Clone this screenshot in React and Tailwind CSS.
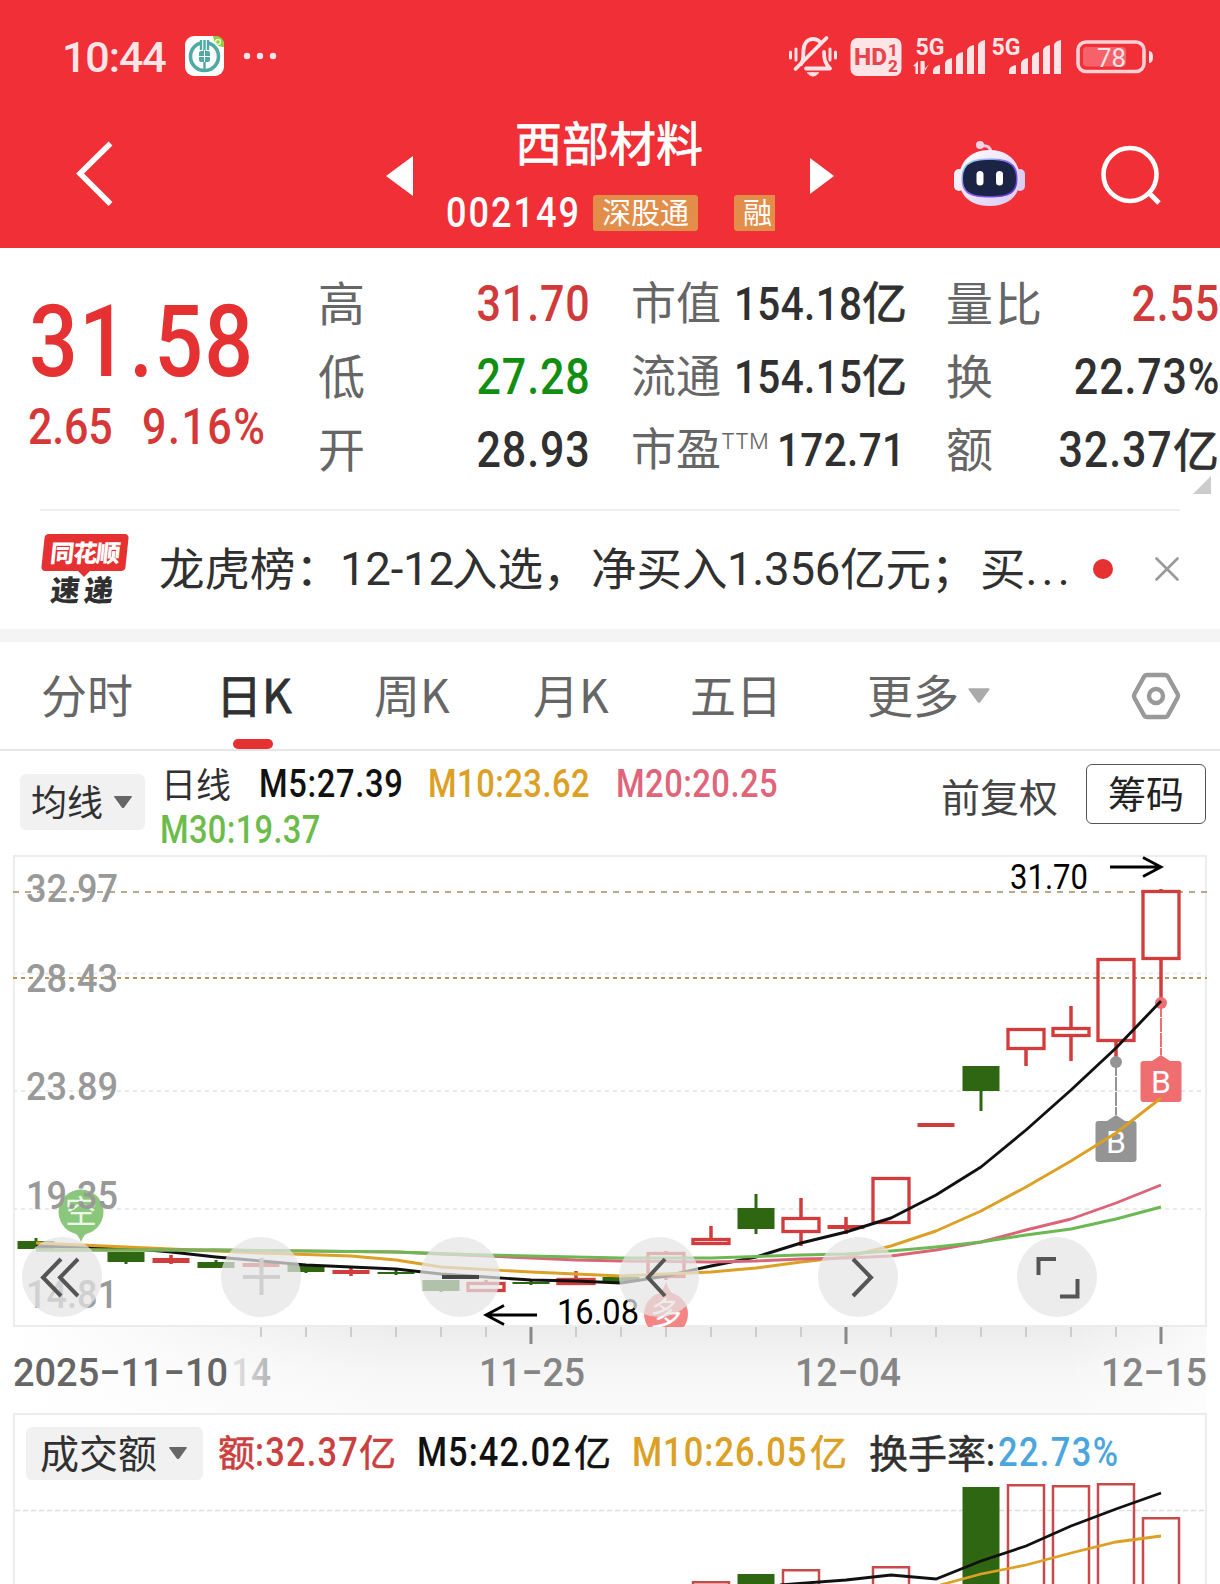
// pages/StockDetail.jsx
import clsx from "clsx";

const CJK = "font-['Noto_Sans_CJK_SC',sans-serif]";

const QUOTE_MAIN = [
  { label: "高", value: "31.70", color: "text-[#d03a3a]" },
  { label: "低", value: "27.28", color: "text-[#128f12]" },
  { label: "开", value: "28.93", color: "text-[#303030]" },
];

const QUOTE_CAP = [
  { label: "市值", value: "154.18", unit: "亿" },
  { label: "流通", value: "154.15", unit: "亿" },
  { label: "市盈", sup: "TTM", value: "172.71" },
];

const QUOTE_RATIO = [
  { label: "量比", value: "2.55", color: "text-[#d03a3a]" },
  { label: "换", value: "22.73%", color: "text-[#303030]" },
  { label: "额", value: "32.37", unit: "亿", color: "text-[#303030]" },
];

// pixel data: x centre, body top/bottom, wick top/bottom
const CANDLES = [
  { x: 36, t: 1241, b: 1249, h: 1238, l: 1249, type: "down" },
  { x: 126, t: 1252, b: 1262, h: 1252, l: 1264, type: "down" },
  { x: 171, t: 1258, b: 1263, h: 1255, l: 1264, type: "up" },
  { x: 216, t: 1262, b: 1268, h: 1260, l: 1268, type: "down" },
  { x: 261, t: 1263, b: 1267, h: 1261, l: 1268, type: "up" },
  { x: 306, t: 1265, b: 1272, h: 1265, l: 1273, type: "down" },
  { x: 351, t: 1270, b: 1274, h: 1268, l: 1276, type: "up" },
  { x: 396, t: 1272, b: 1274, h: 1270, l: 1275, type: "down" },
  { x: 441, t: 1280, b: 1291, h: 1280, l: 1292, type: "down" },
  { x: 486, t: 1282, b: 1292, h: 1280, l: 1292, type: "up" },
  { x: 531, t: 1282, b: 1284, h: 1281, l: 1285, type: "down" },
  { x: 576, t: 1278, b: 1285, h: 1271, l: 1285, type: "up" },
  { x: 621, t: 1277, b: 1282, h: 1277, l: 1283, type: "down" },
  { x: 666, t: 1252, b: 1278, h: 1251, l: 1280, type: "up" },
  { x: 711, t: 1238, b: 1245, h: 1226, l: 1245, type: "up" },
  { x: 756, t: 1208, b: 1229, h: 1194, l: 1234, type: "down" },
  { x: 801, t: 1217, b: 1233, h: 1198, l: 1246, type: "up" },
  { x: 846, t: 1225, b: 1229, h: 1217, l: 1234, type: "up" },
  { x: 891, t: 1177, b: 1224, h: 1177, l: 1224, type: "up" },
  { x: 936, t: 1123, b: 1127, h: 1123, l: 1127, type: "up" },
  { x: 981, t: 1066, b: 1091, h: 1066, l: 1111, type: "down" },
  { x: 1026, t: 1028, b: 1050, h: 1028, l: 1066, type: "up" },
  { x: 1071, t: 1027, b: 1037, h: 1006, l: 1061, type: "up" },
  { x: 1116, t: 958, b: 1042, h: 958, l: 1062, type: "up" },
  { x: 1161, t: 890, b: 960, h: 889, l: 1003, type: "up" },
];

const MA5 = "36,1246 126,1248 171,1252 216,1257 261,1261 306,1265 351,1267 396,1269 441,1274 486,1277 531,1280 576,1281 621,1283 666,1276 711,1266 756,1257 801,1243 846,1232 891,1218 936,1195 981,1167 1026,1130 1071,1090 1116,1048 1161,1001";
const MA10 = "36,1243 126,1247 216,1251 261,1253 351,1256 396,1260 441,1267 531,1272 621,1276 666,1274 711,1272 756,1268 801,1262 846,1257 891,1246 936,1231 981,1211 1026,1187 1071,1161 1116,1133 1161,1098";
const MA20 = "36,1250 216,1250 396,1252 486,1256 576,1260 621,1261 711,1262 756,1261 801,1259 846,1258 891,1256 936,1250 981,1242 1026,1230 1071,1219 1116,1203 1161,1185";
const MA30 = "36,1250 216,1250 396,1252 486,1255 621,1258 711,1258 801,1255 846,1254 891,1251 936,1247 981,1242 1026,1235 1071,1229 1116,1219 1161,1207";

const PRICE_LABELS = [
  { text: "32.97", y: 902 },
  { text: "28.43", y: 992 },
  { text: "23.89", y: 1100 },
  { text: "19.35", y: 1209 },
  { text: "14.81", y: 1308 },
];

const VOLUMES = [
  { x: 711, t: 1581, type: "up" },
  { x: 756, t: 1574, type: "down" },
  { x: 801, t: 1569, type: "up" },
  { x: 891, t: 1566, type: "up" },
  { x: 981, t: 1487, type: "down" },
  { x: 1026, t: 1484, type: "up" },
  { x: 1071, t: 1485, type: "up" },
  { x: 1116, t: 1483, type: "up" },
  { x: 1161, t: 1517, type: "up" },
];

const TICKS = Array.from({ length: 21 }, (_, i) => 261 + i * 45);
const MAJOR_TICKS = [531, 846, 1161];

// Narrow digits, the box keeps the width given by the caller
function Num({ children, className, right, tracking = "tracking-[.02em]" }) {
  return (
    <span className={clsx("flex shrink-0 whitespace-nowrap font-['Roboto',sans-serif] font-medium leading-none", right && "justify-end", className)}>
      <span className={clsx("inline-block scale-x-[.86]", tracking, right ? "origin-right" : "origin-left")}>
        {children}
      </span>
    </span>
  );
}

function Han({ children, className }) {
  return <span className={clsx("shrink-0 -translate-y-[.06em] whitespace-nowrap leading-none", CJK, className)}>{children}</span>;
}

function Caret({ className }) {
  return (
    <svg viewBox="0 0 20 14" className={className}>
      <path d="M2 1h16q1.500 0 .6 1.300L11.200 12.400q-1.200 1.400-2.400 0L1.400 2.300Q.5 1 2 1z" fill="currentColor" />
    </svg>
  );
}

function Signal({ data }) {
  return (
    <svg width="74" height="44" viewBox="0 0 74 44" className="shrink-0 text-[#fde4e6]" fill="currentColor">
      <text x="2.500" y="21" fontFamily="Roboto" fontWeight="700" fontSize="23" textLength="29" lengthAdjust="spacingAndGlyphs">5G</text>
      {data && <path d="M0 32l5-5v13H2.500v-7.500zM7.500 27H10v13H7.500zM11.500 27v13h-2V27zM11.500 27v8l4.500-5-4 7z" />}
      <path d="M20 40v-4q1-4 7-5v9zM32 40V29q1-4 7-5v16zM43 40V23q1-4 7-5v22zM54 40V16q1-4 7-5v29zM65 40V11q1-4 7-5v34z" />
    </svg>
  );
}

function StatusBar() {
  return (
    <div className="flex h-[112px] items-center pl-[62px] pr-[66px] text-[#fde4e6]">
      <span className="w-[123px] pt-[2px] font-['Roboto',sans-serif] text-[43px] font-medium leading-none tracking-[-.025em]">10:44</span>
      <svg width="39" height="40" viewBox="0 0 39 40">
        <rect width="39" height="40" rx="9" fill="#fff" />
        <path d="M28 0h2q9 0 9 9v2q-9 1-11-11z" fill="#8ccf3c" />
        <circle cx="33" cy="6" r="2.500" fill="none" stroke="#e4f6cc" strokeWidth="1.500" />
        <circle cx="19.500" cy="20.500" r="14" fill="none" stroke="#4fa9a5" strokeWidth="3.600" />
        <path d="M15 4h9v8h-9z" fill="#fff" />
        <path d="M16 4v10M19.500 4v31M23 4v10" stroke="#4fa9a5" strokeWidth="2.400" />
        <rect x="14" y="15" width="11" height="11" rx="2" fill="#4fa9a5" />
        <path d="M19.500 14v12M14 20.500h11" stroke="#fff" strokeWidth="1" />
      </svg>
      <svg width="34" height="8" viewBox="0 0 34 8" className="ml-[19px]" fill="currentColor">
        <circle cx="4" cy="4" r="3.200" />
        <circle cx="17" cy="4" r="3.200" />
        <circle cx="30" cy="4" r="3.200" />
      </svg>
      <div className="flex-1" />
      <svg width="48" height="44" viewBox="0 0 48 44" className="mr-[13px] mt-[1px]" fill="none" stroke="currentColor" strokeLinecap="round">
        <path d="M12 29c3-4 2-8 2.500-14C15 8 19 4 24 4c3 0 6 1.500 8 4" strokeWidth="3.800" />
        <path d="M35 17c0 7 1 11 6 16.500H17" strokeWidth="3.800" strokeLinejoin="round" />
        <path d="M6.500 34 37.500 3" strokeWidth="3.800" />
        <path d="M18.500 38q5.500 6.500 11 0z" fill="currentColor" strokeWidth="1" />
        <path d="M1.500 17v6M7 14v11M41 14v11M46.500 17v6" strokeWidth="3" />
      </svg>
      <svg width="52" height="38" viewBox="0 0 52 38" className="mr-[11px] mt-[1px]">
        <rect x=".5" width="51" height="38" rx="7" fill="#fde4e6" />
        <text x="4" y="27" fontFamily="Roboto" fontWeight="800" fontSize="23" fill="#e8454d" textLength="33" lengthAdjust="spacingAndGlyphs">HD</text>
        <text x="38" y="17.500" fontFamily="Roboto" fontWeight="800" fontSize="17" fill="#e8454d">1</text>
        <text x="38" y="34" fontFamily="Roboto" fontWeight="800" fontSize="17" fill="#e8454d">2</text>
      </svg>
      <Signal data />
      <div className="w-[2px]" />
      <Signal />
      <svg width="78" height="34" viewBox="0 0 78 34" className="ml-[13px] mt-[1px]">
        <rect x="2" y="2" width="66" height="29.500" rx="8" fill="none" stroke="#fcd0d4" strokeWidth="3.600" />
        <rect x="7" y="7" width="43" height="19.500" rx="4" fill="#f5626a" />
        <path d="M73 11q4 0 4 6t-4 6z" fill="#fde4e6" />
        <text x="21" y="26.500" fontFamily="Roboto" fontSize="26" fill="#fde4e6" textLength="29" lengthAdjust="spacingAndGlyphs">78</text>
      </svg>
    </div>
  );
}

function Robot() {
  return (
    <svg width="74" height="70" viewBox="0 0 74 70">
      <defs>
        <linearGradient id="shell" x1="0" y1="0" x2="1" y2="1">
          <stop offset="0" stopColor="#fff" />
          <stop offset="1" stopColor="#d9c8f2" />
        </linearGradient>
        <linearGradient id="rim" x1="0" y1="0" x2="1" y2="1">
          <stop offset="0" stopColor="#a4f0f4" />
          <stop offset=".5" stopColor="#8a5cf0" />
          <stop offset="1" stopColor="#5a34d6" />
        </linearGradient>
      </defs>
      <path d="M28 6q10-2 10 8" fill="none" stroke="#f3c9e0" strokeWidth="3" />
      <circle cx="27" cy="5" r="4" fill="#f6d3e6" />
      <rect x="1" y="29" width="10" height="22" rx="5" fill="#f3edfc" />
      <rect x="62" y="29" width="10" height="22" rx="5" fill="#dccdf3" />
      <path d="M36.500 10c20 0 30.500 13 30.500 29S56 66 36.500 66 6 55 6 39s10.500-29 30.500-29z" fill="url(#shell)" />
      <path d="M36.500 18.500c20 0 28 5 28 20s-8 19-28 19-28-4-28-19 8-20 28-20z" fill="url(#rim)" />
      <path d="M36.500 20c19 0 26.500 5 26.500 18.500S55.500 56 36.500 56 10 52 10 38.500 17.500 20 36.500 20z" fill="#1b2444" />
      <rect x="23.500" y="31" width="7" height="14.500" rx="3.500" fill="#fff" />
      <rect x="43" y="31" width="7" height="14.500" rx="3.500" fill="#fff" />
    </svg>
  );
}

function Header() {
  return (
    <header className="h-[248px] bg-[#f12f37]">
      <StatusBar />
      <div className="flex h-[136px] items-start">
        <svg width="40" height="68" viewBox="0 0 40 68" className="ml-[74px] mt-[28px]">
          <path d="M36.500 3.500 6 33.500 36.500 64" fill="none" stroke="#fff" strokeWidth="5.500" />
        </svg>
        <svg width="27" height="40" viewBox="0 0 27 40" className="ml-[272px] mt-[44px]">
          <path d="M27 0v40L0 20z" fill="#fff" />
        </svg>
        <div className="ml-[33px] flex w-[329px] flex-col">
          <Han className="mt-[8px] pl-[69px] text-[47px] text-white [-webkit-text-stroke:.8px]">西部材料</Han>
          <div className="mt-[28px] flex h-[36px] items-center">
            <Num className="w-[147px] text-[42px] text-white" tracking="tracking-[.055em]">002149</Num>
            <span className="flex h-[36px] w-[105px] items-center justify-center rounded-[3px] bg-[#e28d49]">
              <Han className="text-[29px] text-white">深股通</Han>
            </span>
            <span className="ml-[36px] flex h-[36px] w-[41px] items-center overflow-hidden rounded-l-[3px] bg-[#e28d49] pl-[9px]">
              <Han className="text-[29px] text-white">融</Han>
            </span>
          </div>
        </div>
        <svg width="24" height="36" viewBox="0 0 24 36" className="ml-[35px] mt-[46px]">
          <path d="M0 0v36l24-18z" fill="#fff" />
        </svg>
        <div className="ml-[119px] mt-[28px]"><Robot /></div>
        <svg width="62" height="62" viewBox="0 0 62 62" className="ml-[73px] mt-[33px]">
          <circle cx="30" cy="29.500" r="26.500" fill="none" stroke="#fff" strokeWidth="4.600" />
          <path d="m49 48 10 10" stroke="#fff" strokeWidth="5" />
        </svg>
      </div>
    </header>
  );
}

function Quote() {
  return (
    <section className="relative flex h-[261px] pt-[19px]">
      <div className="w-[318px] pl-[29px] text-[#e53131]">
        <div className="flex h-[150px] items-center">
          <Num className="w-[220px] text-[100px]" tracking="tracking-[.014em]">31.58</Num>
        </div>
        <div className="flex h-[20px] items-center text-[50px] text-[#d63838]">
          <Num className="-ml-[1px] w-[114px]" tracking="tracking-[-.005em]">2.65</Num>
          <Num className="w-[130px]" tracking="tracking-[.035em]">9.16%</Num>
        </div>
      </div>
      <div className="w-[273px]">
        {QUOTE_MAIN.map((r) => (
          <div key={r.label} className="flex h-[73px] items-center justify-between">
            <Han className="text-[47px] text-[#666]">{r.label}</Han>
            <Num right className={clsx("w-[120px] text-[50px]", r.color)}>{r.value}</Num>
          </div>
        ))}
      </div>
      <div className="ml-[40px] w-[276px]">
        {QUOTE_CAP.map((r) => (
          <div key={r.label} className="flex h-[73px] items-center text-[#303030]">
            <Han className="text-[45px] text-[#666]">{r.label}</Han>
            {r.sup && <span className="w-[46px] pb-[18px] font-['Inter',sans-serif] text-[22px] font-light leading-none text-[#666]">{r.sup}</span>}
            <span className="flex-1" />
            <Num right className="w-[128px] text-[47px]" tracking="tracking-[.01em]">{r.value}</Num>
            {r.unit ? (
              <Han className="mr-[1px] w-[44px] text-[45px] [-webkit-text-stroke:.8px]">{r.unit}</Han>
            ) : (
              <span className="w-[2px]" />
            )}
          </div>
        ))}
      </div>
      <div className="ml-[38px] flex-1">
        {QUOTE_RATIO.map((r) => (
          <div key={r.label} className="flex h-[73px] items-center justify-between">
            <Han className="ml-[1px] text-[47px] tracking-[.04em] text-[#666]">{r.label}</Han>
            <span className={clsx("flex items-center", r.color)}>
              <Num right className="w-[110px] text-[50px]">{r.value}</Num>
              {r.unit && <Han className="mr-[1px] text-[46px] [-webkit-text-stroke:.8px]">{r.unit}</Han>}
            </span>
          </div>
        ))}
      </div>
      <svg width="18" height="18" viewBox="0 0 18 18" className="absolute bottom-[15px] right-[9px]">
        <path d="M18 0v18H0z" fill="#ccc" />
      </svg>
    </section>
  );
}

function News() {
  return (
    <section className="mx-[40px] flex h-[120px] items-center border-t-2 border-[#eee]">
      <div className="flex w-[119px] flex-col pb-[2px]">
        <div className="flex h-[37px] w-[90px] items-center justify-center">
          <span className="flex h-[37px] w-[84px] -skew-x-6 items-center justify-center rounded-[4px] bg-[#e53131]">
            <Han className="text-[24px] font-black tracking-[-.04em] text-white">同花顺</Han>
          </span>
        </div>
        <svg width="12" height="6" viewBox="0 0 12 6" className="ml-[38px]">
          <path d="M0 0h12L6 6z" fill="#e53131" />
        </svg>
        <Han className="ml-[11px] mt-[-1px] -skew-x-6 text-[29px] font-black tracking-[.16em] text-[#303030]">速递</Han>
      </div>
      <p className="flex w-[920px] items-center whitespace-nowrap text-[45.5px] text-[#303030]">
        <Han className="w-[181px]">龙虎榜：</Han>
        <span className="w-[112px] font-['Roboto',sans-serif] leading-none tracking-[-.005em]">12-12</span>
        <Han className="w-[139px]">入选，</Han>
        <Han className="w-[136px]">净买入</Han>
        <span className="w-[113px] font-['Roboto',sans-serif] leading-none tracking-[-.005em]">1.356</span>
        <Han className="w-[140px]">亿元；</Han>
        <Han>买</Han>
        <span className="font-['Roboto',sans-serif] leading-none tracking-[.09em]">...</span>
      </p>
      <span className="mb-[2px] ml-[14px] size-[20px] shrink-0 rounded-full bg-[#e53131]" />
      <svg width="24" height="24" viewBox="0 0 24 24" className="mb-[2px] ml-[42px] shrink-0" stroke="#999" strokeWidth="2.600" strokeLinecap="round">
        <path d="m1.500 1.500 21 21m0-21-21 21" />
      </svg>
    </section>
  );
}

function Tabs() {
  return (
    <nav className="flex h-[109px] items-center border-b-2 border-[#e6e6e6] pl-[41px] text-[46px] text-[#666]">
      <Han className="w-[175px]">分时</Han>
      <div className="relative flex h-full w-[158px] items-center text-[#303030]">
        <Han className="[-webkit-text-stroke:.8px]">日K</Han>
        <span className="absolute bottom-0 left-[17px] h-[10px] w-[40px] rounded-full bg-[#e53131]" />
      </div>
      <Han className="w-[159px]">周K</Han>
      <Han className="w-[157px]">月K</Han>
      <Han className="w-[177px]">五日</Han>
      <Han>更多</Han>
      <Caret className="ml-[8px] h-[19px] w-[24px] text-[#aaa]" />
      <svg width="50" height="48" viewBox="0 0 50 48" className="ml-[140px]" fill="none" stroke="#999" strokeWidth="4.400" strokeLinejoin="round">
        <path d="M16 3h18q2 0 3 1.800l9.500 17q1 2 0 4l-9.500 17.400q-1 1.800-3 1.800H16q-2 0-3-1.800L3.500 26q-1-2 0-4L13 4.800Q14 3 16 3z" />
        <circle cx="25" cy="24" r="7" />
      </svg>
    </nav>
  );
}

function ChartHeader() {
  return (
    <div className="flex h-[103px] items-start">
      <button className="ml-[20px] mt-[23px] flex h-[56px] w-[125px] items-center rounded-[6px] bg-[#f1f1f1] pl-[11px]">
        <Han className="text-[36px] text-[#303030]">均线</Han>
        <Caret className="ml-[10px] h-[14px] w-[20px] text-[#666]" />
      </button>
      <div className="ml-[16px] mt-[10px] w-[640px] text-[38px]">
        <div className="flex h-[46px] items-center">
          <Han className="w-[98px] text-[35px] text-[#303030]">日线</Han>
          <Num className="w-[169px] text-[#111]">M5:27.39</Num>
          <Num className="w-[188px] text-[#dca024]" tracking="tracking-[.015em]">M10:23.62</Num>
          <Num className="text-[#e0647a]" tracking="tracking-[.015em]">M20:20.25</Num>
        </div>
        <div className="flex h-[46px] items-center">
          <Num className="-ml-[1px] text-[#6cbc4c]" tracking="tracking-[.01em]">M30:19.37</Num>
        </div>
      </div>
      <Han className="ml-[140px] mt-[27px] text-[39px] text-[#444]">前复权</Han>
      <button className="ml-[28px] mt-[13px] flex h-[60px] w-[120px] items-center justify-center rounded-[6px] border-[1.500px] border-[#555]">
        <Han className="text-[38px] text-[#222]">筹码</Han>
      </button>
    </div>
  );
}

function Candle({ x, t, b, h, l, type }) {
  if (type === "down") {
    return (
      <g fill="#2f6612">
        <rect x={x - 1.5} y={h} width="3" height={l - h} />
        <rect x={x - 18.5} y={t} width="37" height={b - t} />
      </g>
    );
  }
  const hollow = b - t > 6;
  return (
    <g fill="#d23c3c">
      {h < t && <rect x={x - 1.75} y={h} width="3.5" height={t - h + 1} />}
      {l > b && <rect x={x - 1.75} y={b - 1} width="3.5" height={l - b + 1} />}
      {hollow ? (
        <rect x={x - 18} y={t + 1.5} width="36" height={b - t - 3} fill="none" stroke="#d23c3c" strokeWidth="3.300" />
      ) : (
        <rect x={x - 18.5} y={t} width="37" height={b - t} />
      )}
    </g>
  );
}

function BuyMark({ x, from, top, color }) {
  return (
    <g>
      <circle cx={x} cy={from} r="6" fill={color} />
      <path d={`M${x} ${from}V${top}`} stroke={color} strokeWidth="2" strokeDasharray="14 1" />
      <path d={`M${x - 9} ${top + 6}l9-6 9 6z`} fill={color} />
      <rect x={x - 20.5} y={top + 6} width="41" height="41" rx="3" fill={color} />
      <text x={x} y={top + 37.5} textAnchor="middle" fontFamily="Roboto" fontSize="32" fill="#fff">B</text>
    </g>
  );
}

const ROUND_BUTTONS = [
  { x: 22, color: "stroke-[#555]", d: "M39 22 21 40.500 39 59M56 22 38 40.500 56 59" },
  { x: 221, color: "stroke-[#cfcfcf]", d: "M22 40h37M40.500 21v37" },
  { x: 420, color: "stroke-[#444]", d: "M22 40h37" },
  { x: 619, color: "stroke-[#555]", d: "M46 22 29 40.500 46 59" },
  { x: 818, color: "stroke-[#555]", d: "M35 22 53 40.500 35 59" },
  { x: 1017, color: "stroke-[#555]", d: "M21.500 38V22H39M43 59.500h17.500V42" },
];

function KChart() {
  return (
    <div className="h-[473px]">
      <svg width="1220" height="473" viewBox="0 854 1220 473">
        <rect x="14" y="856" width="1192" height="470" fill="#fff" stroke="#ececec" strokeWidth="2" />
        <g strokeWidth="2">
          <path d="M13 973.500H1207M13 1091H1207M13 1209H1207" stroke="#eaeaea" strokeDasharray="4 4" />
          <path d="M13 892H1207" stroke="#b8a98a" strokeDasharray="6 6" />
          <path d="M13 978H1207" stroke="#b8955c" strokeDasharray="4 4" />
        </g>
        <circle cx="81" cy="1212" r="22.500" fill="#8bc77b" />
        <path d="M69 1230h24q-9 3-12 12-3-9-12-12z" fill="#8bc77b" />
        <text x="81" y="1223" textAnchor="middle" fontFamily="Noto Sans CJK SC" fontSize="32" fill="#eaf7e6">空</text>
        <g fontFamily="Roboto" fontWeight="500" fontSize="39.500" fill="#999">
          {PRICE_LABELS.map((p) => (
            <text key={p.text} x="26" y={p.y} textLength="92" lengthAdjust="spacingAndGlyphs">{p.text}</text>
          ))}
        </g>
        {CANDLES.map((c) => <Candle key={c.x} {...c} />)}
        <BuyMark x={1116} from={1062} top={1115} color="#949494" />
        <BuyMark x={1161} from={1003} top={1055} color="#ef6e70" />
        <path d="M666 1282q3 11 12 15h-24q9-4 12-15z" fill="#f58584" />
        <circle cx="666" cy="1314" r="22" fill="#f58584" />
        <text x="666" y="1325" textAnchor="middle" fontFamily="Noto Sans CJK SC" fontSize="32" fill="#fff">多</text>
        <g fill="none" strokeWidth="2.900" strokeLinejoin="round">
          <polyline points={MA5} stroke="#111" />
          <polyline points={MA10} stroke="#dca024" />
          <polyline points={MA20} stroke="#dc6478" />
          <polyline points={MA30} stroke="#6cb852" />
        </g>
        <g fill="none" stroke="#000" strokeWidth="2.800">
          <path d="M1110 867h50M1143 857.500l18 9.500-18 9.500" />
          <path d="M537 1315h-50M504 1305.500l-18 9.500 18 9.500" />
        </g>
        <g fontFamily="Roboto" fontSize="35" fill="#000">
          <text x="1010" y="889" textLength="78" lengthAdjust="spacingAndGlyphs">31.70</text>
          <text x="557" y="1324" textLength="82" lengthAdjust="spacingAndGlyphs">16.08</text>
        </g>
        {ROUND_BUTTONS.map((b) => (
          <g key={b.x} transform={`translate(${b.x} 1237)`}>
            <circle cx="40" cy="40" r="40" fill="#e4e4e4" fillOpacity=".72" />
            <path d={b.d} fill="none" strokeWidth="4" className={b.color} />
          </g>
        ))}
      </svg>
    </div>
  );
}

function DateAxis() {
  return (
    <div className="h-[86px]">
      <svg width="1220" height="86" viewBox="0 1327 1220 86">
        <defs>
          <linearGradient id="axisV" x1="0" y1="0" x2="0" y2="1">
            <stop offset="0" stopColor="#ececec" />
            <stop offset=".5" stopColor="#f6f6f6" />
            <stop offset="1" stopColor="#fafafa" />
          </linearGradient>
          <linearGradient id="axisH" x1="0" y1="0" x2="1" y2="0">
            <stop offset="0" stopColor="#fff" />
            <stop offset=".06" stopColor="#fff" stopOpacity=".85" />
            <stop offset=".32" stopColor="#fff" stopOpacity="0" />
            <stop offset=".88" stopColor="#fff" stopOpacity="0" />
            <stop offset="1" stopColor="#fff" stopOpacity=".7" />
          </linearGradient>
          <linearGradient id="fade" x1="0" y1="0" x2="1" y2="0">
            <stop offset="0" stopColor="#e6e6e6" />
            <stop offset="1" stopColor="#b4b4b4" />
          </linearGradient>
        </defs>
        <rect x="13" y="1327" width="1194" height="86" fill="url(#axisV)" />
        <rect x="13" y="1327" width="1194" height="86" fill="url(#axisH)" />
        {TICKS.map((x) =>
          MAJOR_TICKS.includes(x) ? (
            <rect key={x} x={x - 1.5} y="1327" width="3" height="17" fill="#888" />
          ) : (
            <rect key={x} x={x - 1} y="1327" width="2" height="10" fill="#ccc" />
          )
        )}
        <g fontFamily="Roboto" fontWeight="500" fontSize="39.500" fill="#858585">
          <text x="13" y="1386" fill="#666" textLength="215" lengthAdjust="spacingAndGlyphs">2025−11−10</text>
          <text x="231" y="1386" fill="url(#fade)" textLength="40" lengthAdjust="spacingAndGlyphs">14</text>
          <text x="479" y="1386" textLength="106" lengthAdjust="spacingAndGlyphs">11−25</text>
          <text x="795" y="1386" textLength="106" lengthAdjust="spacingAndGlyphs">12−04</text>
          <text x="1101" y="1386" textLength="106" lengthAdjust="spacingAndGlyphs">12−15</text>
        </g>
      </svg>
    </div>
  );
}

function Volume() {
  return (
    <div className="mx-[13px] h-[171px] border-2 border-b-0 border-[#ececec] bg-white">
      <div className="flex h-[68px] items-center pl-[11px] pt-[8px] text-[40px]">
        <button className="mr-[15px] flex h-[53px] w-[177px] shrink-0 items-center rounded-[6px] bg-[#f1f1f1] pl-[14px]">
          <Han className="text-[39px] text-[#303030]">成交额</Han>
          <Caret className="ml-[11px] h-[14px] w-[20px] text-[#666]" />
        </button>
        <div className="flex w-[199px] items-center text-[#cc3f3f]">
          <Han className="w-[37px] text-[37px] [-webkit-text-stroke:.6px]">额</Han>
          <Num className="w-[104px]" tracking="tracking-[.035em]">:32.37</Num>
          <Han className="text-[37px] [-webkit-text-stroke:.6px]">亿</Han>
        </div>
        <div className="flex w-[215px] items-center text-[#111]">
          <Num className="w-[157px]" tracking="tracking-[.03em]">M5:42.02</Num>
          <Han className="text-[37px] [-webkit-text-stroke:.6px]">亿</Han>
        </div>
        <div className="flex w-[237px] items-center text-[#dca024]">
          <Num className="w-[178px]" tracking="tracking-[.03em]">M10:26.05</Num>
          <Han className="text-[37px] [-webkit-text-stroke:.6px]">亿</Han>
        </div>
        <Han className="text-[39px] text-[#303030] [-webkit-text-stroke:.5px]">换手率</Han>
        <Num className="w-[12px] text-[#303030]">:</Num>
        <Num className="text-[#4ba6dd]" tracking="tracking-[.04em]">22.73%</Num>
      </div>
      <svg width="1190" height="101" viewBox="15 1483 1190 101">
        <path d="M15 1510.500H1205" stroke="#ddd" strokeWidth="1.500" strokeDasharray="5 3" />
        {VOLUMES.map((v) =>
          v.type === "down" ? (
            <rect key={v.x} x={v.x - 18.5} y={v.t} width="37" height="120" fill="#2f6612" />
          ) : (
            <rect key={v.x} x={v.x - 18} y={v.t + 1.25} width="36" height="120" fill="none" stroke="#c84a4a" strokeWidth="2.500" />
          )
        )}
        <g fill="none" strokeWidth="2.800">
          <polyline points="780,1585 846,1580 891,1575 936,1579 981,1561 1026,1546 1071,1526 1116,1509 1161,1493" stroke="#111" />
          <polyline points="940,1585 981,1574 1026,1565 1071,1553 1116,1542 1161,1536" stroke="#dca024" />
        </g>
      </svg>
    </div>
  );
}

export default function App() {
  return (
    <div className="h-[1584px] w-[1220px] overflow-hidden bg-white">
      <Header />
      <Quote />
      <News />
      <div className="h-[13px] bg-[#f4f4f4]" />
      <Tabs />
      <ChartHeader />
      <KChart />
      <DateAxis />
      <Volume />
    </div>
  );
}
